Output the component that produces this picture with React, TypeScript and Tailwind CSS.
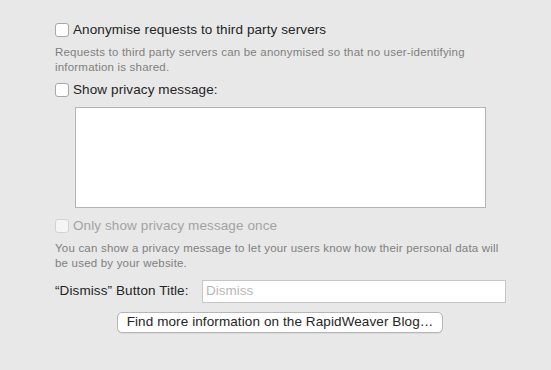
import React from "react";

function Check({ label, disabled = false }: { label: string; disabled?: boolean }) {
  return (
    <label className="flex h-[20px] items-center gap-[4px]">
      <span
        className={`h-[14px] w-[14px] rounded-[3px] border ${
          disabled ? "border-[#d2d2d2] bg-[#f5f5f5]" : "border-[#a8a8a8] bg-white"
        }`}
      />
      <span
        className={`text-[13.5px] leading-[20px] tracking-[0.1px] ${
          disabled ? "text-[#a3a3a3]" : "text-[#242424]"
        }`}
      >
        {label}
      </span>
    </label>
  );
}

export default function App() {
  return (
    <div
      className="h-[370px] w-[551px] bg-[#e8e8e8] pl-[55px] pt-[20px]"
      style={{ fontFamily: '"Liberation Sans", Arial, sans-serif' }}
    >
      <Check label="Anonymise requests to third party servers" />
      <p className="mt-[5px] w-[440px] text-[11.5px] leading-[15px] tracking-[0.2px] text-[#7f7f7f]">
        Requests to third party servers can be anonymised so that no user-identifying information is shared.
      </p>
      <div className="mt-[5px]">
        <Check label="Show privacy message:" />
      </div>
      <div className="ml-[20px] mt-[7px] h-[101px] w-[411px] border border-[#b4b4b4] bg-white" />
      <div className="mt-[8px]">
        <Check label="Only show privacy message once" disabled />
      </div>
      <p className="mt-[5px] w-[445px] text-[11.5px] leading-[15px] tracking-[0.2px] text-[#7f7f7f]">
        You can show a privacy message to let your users know how their personal data will be used by your website.
      </p>
      <div className="mt-[9px] flex items-center">
        <span className="w-[147px] text-[13.5px] tracking-[0.1px] text-[#242424]">“Dismiss” Button Title:</span>
        <div className="flex h-[23px] w-[304px] items-center border border-[#c6c6c6] bg-white pl-[3px] text-[13.5px] text-[#b8b8b8]">
          Dismiss
        </div>
      </div>
      <div className="ml-[62px] mt-[9px] flex h-[21px] w-[326px] items-center justify-center rounded-[5px] border border-[#b6b6b6] bg-white text-[13.5px] tracking-[0.1px] text-[#242424] shadow-[0_1px_0_rgba(0,0,0,0.06)]">
        Find more information on the RapidWeaver Blog…
      </div>
    </div>
  );
}
